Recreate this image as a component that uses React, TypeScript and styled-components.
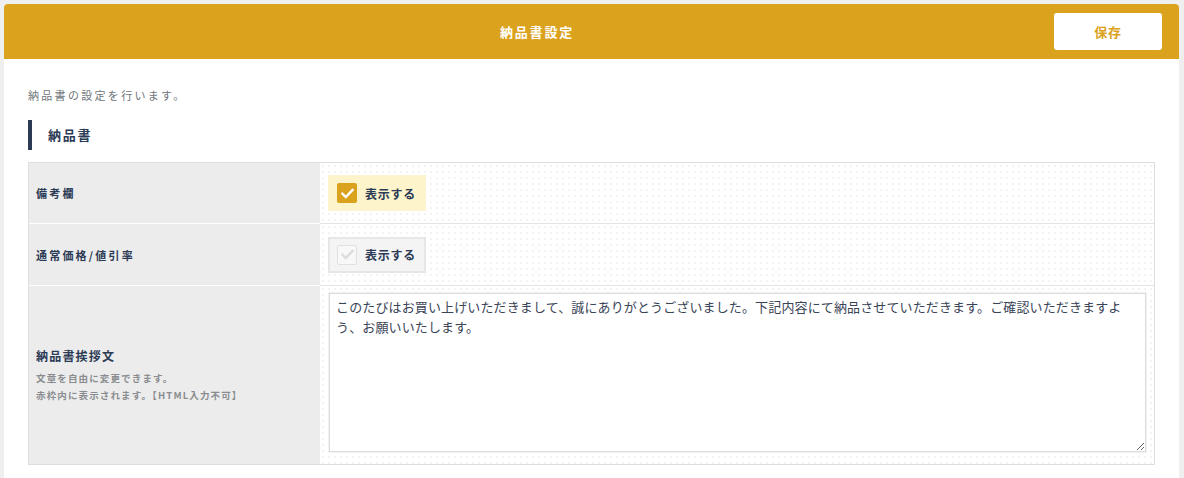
import React from "react";
import styled, { createGlobalStyle } from "styled-components";

const GlobalStyle = createGlobalStyle`
  html, body { margin: 0; padding: 0; }
  body {
    background: #efefef;
    font-family: "Noto Sans CJK JP", "Noto Sans", sans-serif;
    color: #2b3a55;
  }
  * { box-sizing: border-box; }
`;

const Page = styled.div`
  padding: 4px 5px 0 4px;
  height: 478px;
  overflow: hidden;
`;

const Panel = styled.div`
  background: #fff;
  border-radius: 4px 4px 0 0;
  min-height: 474px;
`;

const Header = styled.header`
  height: 55px;
  background: #dba21e;
  border-radius: 4px 4px 0 0;
  display: flex;
  align-items: center;
  padding: 0 17px 0 16px;
`;

const Title = styled.h1`
  flex: 1;
  margin: 0;
  text-align: center;
  color: #fff;
  font-size: 13px;
  font-weight: 700;
  letter-spacing: 0.14em;
`;

const SaveButton = styled.button`
  width: 108px;
  height: 37px;
  background: #fff;
  border: none;
  border-radius: 3px;
  color: #dba21e;
  font-family: inherit;
  font-size: 13px;
  font-weight: 700;
  letter-spacing: 0.05em;
  cursor: pointer;
`;

const Body = styled.div`
  padding: 28px 24px 0 24px;
`;

const Description = styled.p`
  margin: 0;
  font-size: 11px;
  line-height: 16px;
  color: #70757a;
  letter-spacing: 0.21em;
`;

const SectionHeading = styled.h2`
  margin: 17px 0 0;
  height: 30px;
  line-height: 30px;
  border-left: 4px solid #2b3a55;
  padding-left: 16px;
  font-size: 13px;
  font-weight: 700;
  letter-spacing: 0.13em;
  color: #2b3a55;
`;

const Table = styled.div`
  margin-top: 12px;
  border: 1px solid #dedede;
`;

const Row = styled.div<{ $last?: boolean }>`
  display: grid;
  grid-template-columns: 291px 1fr;
  border-bottom: ${(p) => (p.$last ? "none" : "1px solid #e4e4e4")};
`;

const LabelCell = styled.div<{ $last?: boolean }>`
  background: #ececec;
  border-bottom: ${(p) => (p.$last ? "none" : "1px solid #fff")};
  margin-bottom: ${(p) => (p.$last ? "0" : "-1px")};
  padding: 0 7px;
  display: flex;
  flex-direction: column;
  justify-content: center;
`;

const LabelText = styled.div`
  font-size: 11px;
  font-weight: 700;
  letter-spacing: 0.2em;
  color: #2b3a55;
`;

const LabelTitle = styled.div`
  font-size: 12px;
  font-weight: 700;
  letter-spacing: 0.1em;
  color: #2b3a55;
  margin-bottom: 6px;
`;

const LabelNote = styled.div`
  font-size: 9.5px;
  font-weight: 700;
  line-height: 17px;
  letter-spacing: 0.12em;
  color: #8a8c8f;
`;

const dotted = `
  background-color: #fff;
  background-image: radial-gradient(circle, #efefef 0.6px, transparent 1px);
  background-size: 6px 6px;
`;

const ValueCell = styled.div<{ $height: number }>`
  min-height: ${(p) => p.$height}px;
  ${dotted}
  padding: 0 8px;
  display: flex;
  align-items: center;
`;

const TextCell = styled.div`
  ${dotted}
  padding: 7px 8px 12px 9px;
`;

const CheckLabel = styled.label<{ $checked: boolean }>`
  width: 98px;
  height: 36px;
  display: flex;
  align-items: center;
  gap: 8px;
  background-color: ${(p) => (p.$checked ? "#fdf4cb" : "#f4f4f4")};
  border: ${(p) => (p.$checked ? "none" : "2px solid #e6e6e6")};
  padding: 0 0 0 ${(p) => (p.$checked ? "9px" : "7px")};
  font-size: 12px;
  font-weight: 700;
  letter-spacing: 0.06em;
  color: #2b3a55;
  cursor: pointer;
`;

const Box = styled.span<{ $checked: boolean }>`
  width: 20px;
  height: 20px;
  border-radius: 2px;
  display: flex;
  align-items: center;
  justify-content: center;
  background: ${(p) => (p.$checked ? "#dba21e" : "#f8f8f8")};
  border: ${(p) => (p.$checked ? "none" : "1px solid #e0e0e0")};
  flex-shrink: 0;
`;

const TextArea = styled.textarea`
  display: block;
  width: 100%;
  height: 159px;
  border: 1px solid #dcdcdc;
  box-shadow: 0 0 0 1px #f2f2f2;
  padding: 3px 12px 3px 6px;
  font-family: "Noto Sans CJK JP", "Noto Sans", sans-serif;
  font-size: 13px;
  line-height: 20px;
  letter-spacing: 0.13px;
  color: #3a4457;
  background: #fff;
  resize: vertical;
  outline: none;
`;

const Check = ({ color }: { color: string }) => (
  <svg width="13" height="11" viewBox="0 0 13 11">
    <path d="M1.5 5.8 L4.8 9 L11.5 2" fill="none" stroke={color} strokeWidth="2.4" strokeLinecap="square" />
  </svg>
);

const CheckOption = ({ checked }: { checked: boolean }) => (
  <CheckLabel $checked={checked}>
    <Box $checked={checked}>
      <Check color={checked ? "#fff" : "#dcdcdc"} />
    </Box>
    表示する
  </CheckLabel>
);

const message =
  "このたびはお買い上げいただきまして、誠にありがとうございました。下記内容にて納品させていただきます。ご確認いただきますよう、お願いいたします。";

export default function App() {
  return (
    <>
      <GlobalStyle />
      <Page>
        <Panel>
          <Header>
            <Title>納品書設定</Title>
            <SaveButton>保存</SaveButton>
          </Header>
          <Body>
            <Description>納品書の設定を行います。</Description>
            <SectionHeading>納品書</SectionHeading>
            <Table>
              <Row>
                <LabelCell>
                  <LabelText>備考欄</LabelText>
                </LabelCell>
                <ValueCell $height={60}>
                  <CheckOption checked />
                </ValueCell>
              </Row>
              <Row>
                <LabelCell>
                  <LabelText>通常価格/値引率</LabelText>
                </LabelCell>
                <ValueCell $height={61}>
                  <CheckOption checked={false} />
                </ValueCell>
              </Row>
              <Row $last>
                <LabelCell $last>
                  <LabelTitle>納品書挨拶文</LabelTitle>
                  <LabelNote>
                    文章を自由に変更できます。
                    <br />
                    赤枠内に表示されます。【HTML入力不可】
                  </LabelNote>
                </LabelCell>
                <TextCell>
                  <TextArea defaultValue={message} />
                </TextCell>
              </Row>
            </Table>
          </Body>
        </Panel>
      </Page>
    </>
  );
}
